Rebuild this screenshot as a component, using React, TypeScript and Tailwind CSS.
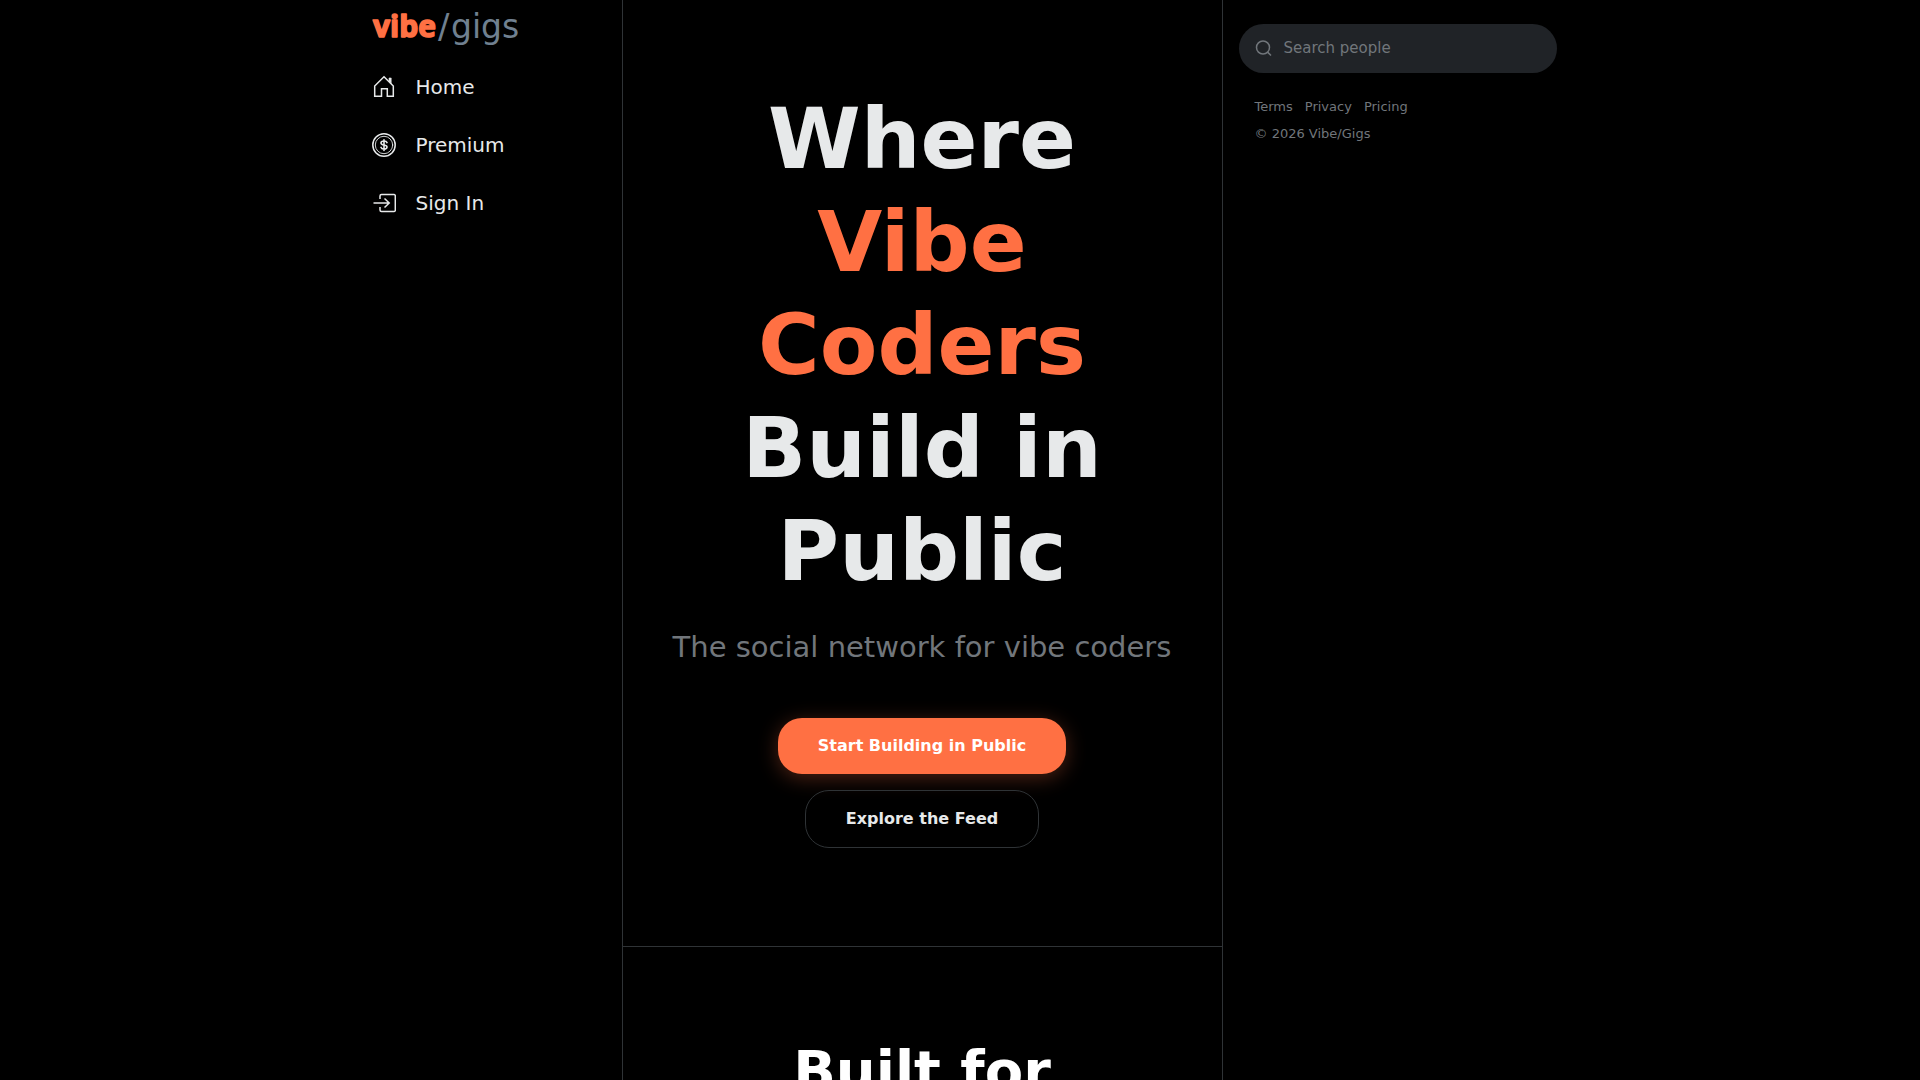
import { useState } from 'react';

function HomeIcon() {
  return (
    <svg viewBox="0 0 24 24" className="size-6 shrink-0" fill="none" stroke="currentColor" strokeWidth="1.5">
      <path d="M2.700 21.300V11L12 1.800l9.300 9.200v10.300h-6v-7.500H9.500v7.500z" />
      <path d="M17 3h2.200v5.500L17 6.300z" fill="currentColor" strokeWidth="0.600" />
    </svg>
  );
}

function CoinIcon() {
  return (
    <svg viewBox="0 0 24 24" className="size-6 shrink-0" fill="none" stroke="currentColor" strokeLinecap="round">
      <circle cx="12" cy="12" r="11.200" strokeWidth="1.500" />
      <circle cx="12" cy="12" r="8.700" strokeWidth="0.900" />
      <path d="M15 9.600c-.4-1-1.500-1.600-3-1.600-1.700 0-3 .7-3 2s1.200 1.700 3 2 3 .8 3 2.100-1.300 2-3 2c-1.500 0-2.700-.6-3-1.700M12 6.700v10.700" strokeWidth="1.600" />
    </svg>
  );
}

function SignInIcon() {
  return (
    <svg viewBox="0 0 24 24" className="size-6 shrink-0" fill="none" stroke="currentColor" strokeWidth="1.500">
      <path d="M8 8V5a1.500 1.500 0 0 1 1.500-1.500H22A1.300 1.300 0 0 1 23.300 5v14a1.300 1.300 0 0 1-1.300 1.500H9.500A1.500 1.500 0 0 1 8 19v-3" />
      <path d="M1.500 12H17M12.500 7.500L17.200 12l-4.700 4.500" />
    </svg>
  );
}

const navItems = [
  { label: 'Home', icon: HomeIcon },
  { label: 'Premium', icon: CoinIcon },
  { label: 'Sign In', icon: SignInIcon },
];

function Logo() {
  return (
    <a href="#" aria-label="vibe/gigs" className="block">
      <svg viewBox="0 0 160 48" className="h-12 w-40">
        <text
          x="1"
          y="35"
          fontSize="30"
          fontWeight="700"
          fill="#ff7043"
          stroke="#ff7043"
          strokeWidth="1.500"
          strokeLinejoin="round"
          className="font-['Open_Sans',sans-serif]"
        >
          vibe
        </text>
        <text x="66" y="36" fontSize="34" fill="#708090">/</text>
        <text x="79" y="36" fontSize="33" fill="#708090">gigs</text>
      </svg>
    </a>
  );
}

function Sidebar() {
  return (
    <header className="w-[275px] shrink-0 border-r border-[#2f3336] px-6 pt-0.5">
      <Logo />
      <nav className="mt-2">
        {navItems.map(({ label, icon: Icon }) => (
          <a key={label} href="#" className="flex h-[58px] items-center gap-5 text-xl">
            <Icon />
            <span>{label}</span>
          </a>
        ))}
      </nav>
    </header>
  );
}

function Hero() {
  return (
    <section className="flex flex-col items-center border-b border-[#2f3336] px-10 pt-[88px] pb-[98px] text-center">
      <h1 className="text-[84px] leading-[103px] font-bold">
        Where <span className="text-[#ff7043]">Vibe Coders</span> Build in Public
      </h1>
      <p className="mt-5 text-[29px] leading-[48px] text-[#71767b]">The social network for vibe coders</p>
      <div className="mt-[47px] flex flex-col items-center gap-4 font-bold">
        <button type="button" className="h-14 rounded-3xl bg-[#ff7043] px-10 text-white shadow-[0_4px_20px_rgba(255,112,67,0.3)]">
          Start Building in Public
        </button>
        <button type="button" className="h-[58px] rounded-3xl border border-[#2f3336] px-10">
          Explore the Feed
        </button>
      </div>
    </section>
  );
}

function RightColumn() {
  const [query, setQuery] = useState('');

  return (
    <aside className="w-[350px] shrink-0 px-4 pt-6">
      <label className="flex h-[49px] items-center gap-[11px] rounded-full bg-[#202327] px-4 text-[#71767b]">
        <svg viewBox="0 0 18 18" className="size-[18px] shrink-0" fill="none" stroke="currentColor" strokeWidth="1.500">
          <circle cx="8" cy="7.500" r="6.500" />
          <path d="M12.600 12.100L16 15.500" />
        </svg>
        <input
          type="text"
          aria-label="Search people"
          placeholder="Search people"
          value={query}
          onChange={(e) => setQuery(e.target.value)}
          className="w-full bg-transparent text-[15px] text-[#e7e9ea] outline-none placeholder:text-[#71767b]"
        />
      </label>
      <footer className="mt-5 px-4 text-[13px] leading-[27px] text-[#71767b]">
        <nav className="flex gap-3">
          <a href="#">Terms</a>
          <a href="#">Privacy</a>
          <a href="#">Pricing</a>
        </nav>
        <p>© 2026 Vibe/Gigs</p>
      </footer>
    </aside>
  );
}

export default function App() {
  return (
    <div className="h-screen overflow-hidden bg-black font-['DejaVu_Sans',sans-serif] text-[#e7e9ea]">
      <div className="mx-auto flex min-h-full max-w-[1225px]">
        <Sidebar />
        <main className="min-w-0 flex-1 border-r border-[#2f3336]">
          <Hero />
          <section className="px-10 pt-[88px] text-center">
            <h2 className="text-[56px] leading-[72px] font-bold text-white">Built for</h2>
          </section>
        </main>
        <RightColumn />
      </div>
    </div>
  );
}
